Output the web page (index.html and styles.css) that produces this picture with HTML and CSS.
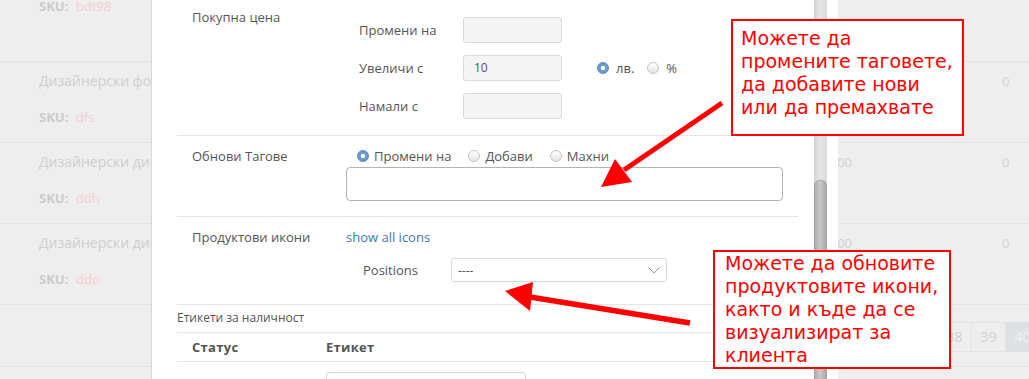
FILE: index.html
```html
<!DOCTYPE html>
<html lang="bg">
<head>
<meta charset="utf-8">
<link rel="stylesheet" href="styles.css">
</head>
<body>
<div class="list">
  <div class="row first">
    <div class="c-name"><div class="sku"><b>SKU:</b> <span>bdt98</span></div></div>
    <div class="c-price"></div>
    <div class="c-qty"></div>
  </div>
  <div class="row">
    <div class="c-name"><div class="title">Дизайнерски фотьойл</div><div class="sku"><b>SKU:</b> <span>dfs</span></div></div>
    <div class="c-price"></div>
    <div class="c-qty">0</div>
  </div>
  <div class="row">
    <div class="c-name"><div class="title">Дизайнерски диван</div><div class="sku"><b>SKU:</b> <span>ddh</span></div></div>
    <div class="c-price">1200.00</div>
    <div class="c-qty">0</div>
  </div>
  <div class="row">
    <div class="c-name"><div class="title">Дизайнерски диван</div><div class="sku"><b>SKU:</b> <span>ddo</span></div></div>
    <div class="c-price">1400.00</div>
    <div class="c-qty">0</div>
  </div>
  <div class="row pager-row">
    <div class="pager">
      <span class="pg">38</span><span class="pg">39</span><span class="pg active">40</span>
    </div>
  </div>
</div>

<div class="modal">
  <div class="modal-body">
    <section class="sec sec-price">
      <div class="lbl">Покупна цена</div>
      <div class="price-grid">
        <div class="sublbl">Промени на</div>
        <div class="inp"></div>
        <div></div>
        <div class="sublbl">Увеличи с</div>
        <div class="inp">10</div>
        <div class="radios unit">
          <span class="radio on"></span><span class="rtxt">лв.</span>
          <span class="radio"></span><span class="rtxt">%</span>
        </div>
        <div class="sublbl">Намали с</div>
        <div class="inp"></div>
        <div></div>
      </div>
    </section>

    <section class="sec sec-tags">
      <div class="lbl">Обнови Тагове</div>
      <div class="tags-col">
        <div class="radios tagmode">
          <span class="radio on"></span><span class="rtxt">Промени на</span>
          <span class="radio"></span><span class="rtxt">Добави</span>
          <span class="radio"></span><span class="rtxt">Махни</span>
        </div>
        <div class="textarea"></div>
      </div>
    </section>

    <section class="sec sec-icons">
      <div class="lbl">Продуктови икони</div>
      <div class="icons-col">
        <a class="link">show all icons</a>
        <div class="pos-row">
          <span class="sublbl pos-lbl">Positions</span>
          <div class="select"><span>----</span>
            <svg class="chev" width="12" height="7" viewBox="0 0 12 7"><polyline points="0.5,0.5 6,6 11.5,0.5" fill="none" stroke="#9a9a9a" stroke-width="1"/></svg>
          </div>
        </div>
      </div>
    </section>

    <div class="stock-title">Етикети за наличност</div>
    <div class="stock-head">
      <div class="th th1">Статус</div>
      <div class="th">Етикет</div>
    </div>
    <div class="stock-row">
      <div class="td td1">В наличност</div>
      <div class="inp wide"></div>
    </div>
  </div>
  <div class="scrollbar"><div class="thumb"></div></div>
</div>

<div class="note note1">Можете да<br>промените таговете,<br>да добавите нови<br>или да премахвате</div>
<div class="note note2">Можете да обновите<br>продуктовите икони,<br>както и къде да се<br>визуализират за<br>клиента</div>

<svg class="arrows" width="1029" height="379" viewBox="0 0 1029 379">
  <line x1="722" y1="103" x2="624" y2="170" stroke="#ff0000" stroke-width="5"/>
  <polygon points="601,187 615,159 632,182" fill="#ff0000"/>
  <line x1="690" y1="323" x2="530" y2="297" stroke="#ff0000" stroke-width="5.5"/>
  <polygon points="505,291 533,282 530,311" fill="#ff0000"/>
</svg>
</body>
</html>
```

FILE: styles.css
```css
html, body {
  margin: 0;
  padding: 0;
  overflow: hidden;
  width: 1029px;
  height: 379px;
}
body {
  background: #eeeeee;
  font-family: "Open Sans", "Liberation Sans", sans-serif;
  font-size: 13px;
  color: #555;
  position: relative;
}

/* background list */
.list {
  margin-top: -19px;
}
.row {
  display: grid;
  grid-template-columns: 739px 113px 177px;
  height: 80px;
  border-bottom: 1px solid #e3e3e3;
  box-sizing: content-box;
  color: #cfcfcf;
}
.c-name {
  padding: 9px 0 0 39px;
}
.row.first .c-name {
  padding-top: 15px;
}
.title {
  font-size: 14px;
  line-height: 20px;
  white-space: nowrap;
}
.sku {
  margin-top: 16px;
  line-height: 20px;
  font-size: 13px;
}
.row.first .sku { margin-top: 0; }
.sku b { color: #cbcbcb; font-weight: 700; }
.sku span { color: #f2cece; margin-left: 4px; }
.c-price {
  padding-top: 9px;
  line-height: 20px;
  text-align: right;
  font-size: 13px;
  color: #d0d0d0;
}
.c-qty {
  padding: 9px 0 0 150px;
  line-height: 20px;
  font-size: 13px;
  color: #d2d2d2;
}
.pager-row {
  height: 61px;
  display: block;
}
.pager {
  display: flex;
  padding: 17px 0 0 937px;
  white-space: nowrap;
}
.pg {
  flex: none;
  width: 33px;
  height: 28px;
  line-height: 28px;
  text-align: center;
  border: 1px solid #e3e3e3;
  border-left: none;
  color: #d0d0d0;
  font-size: 14px;
}
.pg:first-child { border-left: 1px solid #e3e3e3; }
.pg.active {
  background: #dde1e4;
  color: #f2f2f2;
  border-color: #dde1e4;
}

/* modal */
.modal {
  position: absolute;
  top: 0;
  left: 151px;
  width: 687px;
  height: 379px;
  box-sizing: border-box;
  border-left: 1px solid #d6d6d6;
  background: #fff;
  display: flex;
  padding-right: 11px;
  overflow: hidden;
}
.modal-body {
  flex: 1;
  padding: 0 16px 0 25px;
  min-width: 0;
}
.scrollbar {
  flex: none;
  width: 13px;
  background: linear-gradient(to right, #d2d2d2, #e6e6e6 45%, #dadada);
  padding-top: 180px;
  box-sizing: border-box;
}
.thumb {
  height: 220px;
  border-radius: 6px 6px 0 0;
  background: linear-gradient(to right, #b0b0b0, #c9c9c9 45%, #a9a9a9);
  border: 1px solid #a2a2a2;
  border-bottom: none;
}

.sec {
  border-bottom: 1px solid #e6e6e6;
  display: grid;
  padding-left: 15px;
}
.lbl {
  line-height: 20px;
  color: #555;
  white-space: nowrap;
}
.sublbl {
  color: #555;
  white-space: nowrap;
}

.sec-price {
  grid-template-columns: 167px 1fr;
  padding-top: 7px;
  padding-bottom: 16px;
}
.price-grid {
  margin-top: 10px;
  display: grid;
  grid-template-columns: 104px 99px 1fr;
  grid-auto-rows: 26px;
  row-gap: 12px;
  align-items: center;
}
.inp {
  height: 26px;
  box-sizing: border-box;
  background: #f4f4f4;
  border: 1px solid #dadada;
  border-radius: 3px;
  padding-left: 10px;
  line-height: 24px;
  font-size: 12px;
  color: #555;
}
.radios {
  display: flex;
  align-items: center;
}
.unit { margin-left: 35px; }
.radio {
  flex: none;
  width: 12px;
  height: 12px;
  box-sizing: border-box;
  border-radius: 50%;
  border: 1px solid #c4c4c4;
  background: linear-gradient(#ffffff, #e4e4e4);
}
.radio.on {
  border-color: #5b8fc4;
  background: radial-gradient(circle, #ffffff 0 1.8px, #6d9fd2 2.4px, #5e93c9 100%);
}
.rtxt {
  margin-left: 6px;
  margin-right: 13px;
  color: #555;
  font-size: 13px;
}
.unit .rtxt { margin-left: 7px; }

.sec-tags {
  grid-template-columns: 154px 1fr;
  padding-top: 10px;
  padding-bottom: 15px;
}
.tagmode {
  height: 20px;
  margin-left: 11px;
}
.tagmode .rtxt { margin-left: 5px; margin-right: 17px; }
.textarea {
  margin-top: 1px;
  width: 437px;
  height: 34px;
  box-sizing: border-box;
  border: 1px solid #b4b4b4;
  border-radius: 4px;
  background: #fff;
}

.sec-icons {
  grid-template-columns: 154px 1fr;
  padding-top: 10px;
  padding-bottom: 22px;
}
.link {
  display: block;
  line-height: 20px;
  color: #3b7bb3;
}
.pos-row {
  margin-top: 11px;
  display: flex;
  align-items: center;
  padding-left: 17px;
}
.pos-lbl {
  width: 88px;
}
.select {
  width: 216px;
  height: 24px;
  box-sizing: border-box;
  border: 1px solid #d9d9d9;
  border-radius: 3px;
  display: flex;
  align-items: center;
  justify-content: space-between;
  padding: 0 6px 0 6px;
  font-size: 12px;
  color: #555;
}
.chev { display: block; }

.stock-title {
  font-size: 12px;
  line-height: 20px;
  padding: 3px 0 4px;
  border-bottom: 1px solid #e6e6e6;
  color: #555;
}
.stock-head {
  display: grid;
  grid-template-columns: 149px 1fr;
  height: 28px;
  align-items: center;
  border-bottom: 1px solid #e6e6e6;
}
.th {
  font-weight: 700;
  color: #555;
  letter-spacing: 0.3px;
}
.th1 { padding-left: 15px; }
.stock-row {
  display: grid;
  grid-template-columns: 149px 200px;
  padding-top: 10px;
  align-items: center;
}
.td1 { padding-left: 15px; padding-top: 2px; }
.inp.wide { background: #fff; border-color: #d6d6d6; }

/* callouts */
.note {
  position: absolute;
  box-sizing: border-box;
  background: #fff;
  border: 2px solid #ff0000;
  color: #ff0000;
  font-family: "DejaVu Sans", Verdana, sans-serif;
  font-size: 19px;
  line-height: 23px;
  white-space: nowrap;
}
.note1 {
  left: 731px;
  top: 19px;
  width: 233px;
  height: 117px;
  padding: 6px 0 0 8px;
}
.note2 {
  left: 713px;
  top: 250px;
  width: 238px;
  height: 119px;
  padding: 0 0 0 10px;
}
.arrows {
  position: absolute;
  left: 0;
  top: 0;
  pointer-events: none;
}
```
